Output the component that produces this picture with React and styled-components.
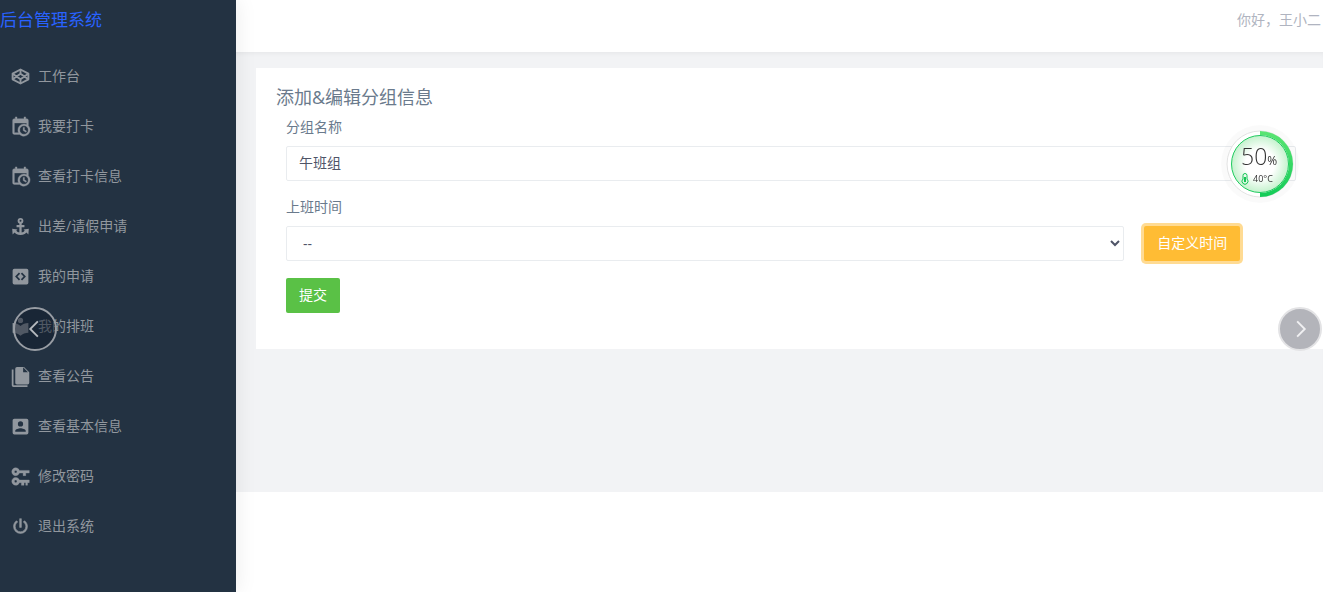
import React from 'react';
import styled, { createGlobalStyle } from "styled-components";

const menuItems = [
    { text: "工作台", icon: "codepen" },
    { text: "我要打卡", icon: "calendar" },
    { text: "查看打卡信息", icon: "calendar" },
    { text: "出差/请假申请", icon: "anchor" },
    { text: "我的申请", icon: "code" },
    { text: "我的排班", icon: "reader" },
    { text: "查看公告", icon: "files" },
    { text: "查看基本信息", icon: "account" },
    { text: "修改密码", icon: "keys" },
    { text: "退出系统", icon: "power" },
];

const icons = {
    codepen: (
        <g fill="none" stroke="currentColor" strokeWidth="2.2" strokeLinejoin="round">
            <path d="M12 4L21 8.8V15.2L12 20L3 15.2V8.8Z" />
            <path d="M12 4V8.600M12 15.400V20M3 8.800L12 15.200L21 8.800M3 15.200L12 8.800L21 15.200" />
        </g>
    ),
    calendar: <path strokeWidth="0.4" stroke="currentColor" d="M15,13H16.5V15.82L18.94,17.23L18.19,18.53L15,16.69V13M19,8H5V19H9.67C9.24,18.09 9,17.07 9,16A7,7 0 0,1 16,9C17.07,9 18.09,9.24 19,9.67V8M5,21C3.89,21 3,20.1 3,19V5C3,3.89 3.89,3 5,3H6V1H8V3H16V1H18V3H19A2,2 0 0,1 21,5V11.1C22.24,12.36 23,14.09 23,16A7,7 0 0,1 16,23C14.09,23 12.36,22.24 11.1,21H5M16,11.15A4.85,4.85 0 0,0 11.15,16C11.15,18.68 13.32,20.85 16,20.85A4.85,4.85 0 0,0 20.85,16C20.85,13.32 18.68,11.15 16,11.15Z" />,
    anchor: (
        <g>
            <path fill="none" stroke="currentColor" strokeWidth="2.6" d="M12 7V20M7.500 11.500H16.500M5 16.500C6.500 19 9 20.300 12 20.300S17.500 19 19 16.500" />
            <circle cx="12" cy="5.5" r="2.2" fill="none" stroke="currentColor" strokeWidth="2.2" />
            <path d="M2.500 14.500L8.500 15.500L3 21ZM21.500 14.500L15.500 15.500L21 21Z" />
        </g>
    ),
    code: <path fillRule="evenodd" d="M5,3H19A2,2 0 0,1 21,5V19A2,2 0 0,1 19,21H5A2,2 0 0,1 3,19V5A2,2 0 0,1 5,3ZM10.2,7.4L5.8,12L10.2,16.6L11.6,15.2L8.5,12L11.6,8.8ZM13.8,7.4L12.4,8.8L15.5,12L12.4,15.2L13.8,16.6L18.2,12Z" />,
    reader: <path d="M12,8A3,3 0 0,0 15,5A3,3 0 0,0 12,2A3,3 0 0,0 9,5A3,3 0 0,0 12,8M12,11.54C9.64,9.35 6.5,8 3,8V19C6.5,19 9.64,20.35 12,22.54C14.36,20.35 17.5,19 21,19V8C17.5,8 14.36,9.35 12,11.54Z" />,
    files: <path d="M15,7H20.5L15,1.5V7M8,1H16L22,7V19A2,2 0 0,1 20,21H8C6.89,21 6,20.1 6,19V3A2,2 0 0,1 8,1M4,4V22H20V24H4A2,2 0 0,1 2,22V4H4Z" />,
    account: <path d="M6,17C6,15 10,13.9 12,13.9C14,13.9 18,15 18,17V18H6M15,9A3,3 0 0,1 12,12A3,3 0 0,1 9,9A3,3 0 0,1 12,6A3,3 0 0,1 15,9M3,5V19A2,2 0 0,0 5,21H19A2,2 0 0,0 21,19V5A2,2 0 0,0 19,3H5C3.89,3 3,3.9 3,5Z" />,
    keys: <path strokeWidth="0.4" stroke="currentColor" d="M6.5,2C8.46,2 10.13,3.25 10.74,5H22V8H18V11H15V8H10.74C10.13,9.75 8.46,11 6.5,11C4,11 2,9 2,6.5C2,4 4,2 6.5,2M6.5,5A1.5,1.5 0 0,0 5,6.5A1.5,1.5 0 0,0 6.5,8A1.5,1.5 0 0,0 8,6.5A1.5,1.5 0 0,0 6.5,5M6.5,13C8.46,13 10.13,14.25 10.74,16H22V19H20V22H18V19H16V22H13V19H10.74C10.13,20.75 8.46,22 6.5,22C4,22 2,20 2,17.5C2,15 4,13 6.5,13M6.5,16A1.5,1.5 0 0,0 5,17.5A1.5,1.5 0 0,0 6.5,19A1.5,1.5 0 0,0 8,17.5A1.5,1.5 0 0,0 6.5,16Z" />,
    power: <path strokeWidth="0.6" stroke="currentColor" d="M16.56,5.44L15.11,6.89C16.84,7.94 18,9.83 18,12A6,6 0 0,1 12,18A6,6 0 0,1 6,12C6,9.83 7.16,7.94 8.88,6.88L7.44,5.44C5.36,6.88 4,9.28 4,12A8,8 0 0,0 12,20A8,8 0 0,0 20,12C20,9.28 18.64,6.88 16.56,5.44M13,3H11V13H13Z" />,
};

const Gauge = () => (
    <GaugeBox>
        <GaugeDrawing viewBox="0 0 80 80">
            <defs>
                <radialGradient id="glow">
                    <stop offset="0.5" stopColor="#ffffff" />
                    <stop offset="1" stopColor="#c4f2cd" />
                </radialGradient>
                <linearGradient id="ring" x1="0" y1="0" x2="0" y2="1">
                    <stop offset="0" stopColor="#5be573" />
                    <stop offset="1" stopColor="#12cb57" />
                </linearGradient>
            </defs>
            <circle cx="40" cy="40" r="39" fill="#000" fillOpacity="0.02" />
            <circle cx="40" cy="40" r="33" fill="#fff" stroke="#e2e2e2" />
            <path d="M40 7A33 33 0 0 1 40 73Z" fill="url(#ring)" />
            <circle cx="40" cy="40" r="29" fill="#fff" />
            <circle cx="40" cy="40" r="28.5" fill="url(#glow)" stroke="#1fcb5f" />
        </GaugeDrawing>
        <GaugeText>
            <Percent>50<small>%</small></Percent>
            <Temperature>
                <svg width="8" height="12" viewBox="0 0 8 12" fill="none" stroke="#14c656">
                    <path d="M2 6V2.500A2 2 0 0 1 6 2.500V6A3 3 0 1 1 2 6Z" />
                    <path strokeWidth="2" d="M4 4V9" />
                </svg>
                40°C
            </Temperature>
        </GaugeText>
    </GaugeBox>
)

const App = () => {
    return (
        <Page>
            <GlobalStyle />
            <Sidebar>
                <Brand href="#">后台管理系统</Brand>
                <Menu>
                    {menuItems.map((item) => (
                        <li key={item.text}>
                            <MenuLink href="#">
                                <MenuIcon viewBox="0 0 24 24">{icons[item.icon]}</MenuIcon>
                                {item.text}
                            </MenuLink>
                        </li>
                    ))}
                </Menu>
            </Sidebar>
            <Main>
                <Header>你好，王小二</Header>
                <Content>
                    <Card>
                        <CardTitle>添加&amp;编辑分组信息</CardTitle>
                        <Form onSubmit={(e) => e.preventDefault()}>
                            <Label htmlFor="groupName">分组名称</Label>
                            <Input id="groupName" type="text" defaultValue="午班组" />
                            <Label htmlFor="workTime">上班时间</Label>
                            <TimeRow>
                                <Select id="workTime">
                                    <option>--</option>
                                </Select>
                                <Button type="button" $color="#ffbc34" $ring="#ffdb93">自定义时间</Button>
                            </TimeRow>
                            <Button type="submit" $color="#5ac146">提交</Button>
                        </Form>
                    </Card>
                </Content>
            </Main>
            <Gauge />
            <ArrowButton $side="left" aria-label="上一张">
                <svg viewBox="0 0 42 42"><path d="M24 13L16 21L24 29" /></svg>
            </ArrowButton>
            <ArrowButton $side="right" aria-label="下一张">
                <svg viewBox="0 0 42 42"><path d="M18 13L26 21L18 29" /></svg>
            </ArrowButton>
        </Page>
    )
}

export default App

const GlobalStyle = createGlobalStyle`
    * {
        box-sizing: border-box;
    }
    body {
        margin: 0;
        background: #fff;
        color: #6a7a8c;
        font-family: "Open Sans", "Noto Sans CJK SC", sans-serif;
        font-size: 14px;
        line-height: 20px;
    }
    button, input, select {
        font: inherit;
    }
`
const Page = styled.div`
    display: flex;
    min-height: 100vh;
    overflow: hidden;
`
const Sidebar = styled.nav`
    flex: none;
    width: 236px;
    background: #233242;
    box-shadow: 1px 0 20px rgba(0, 0, 0, 0.08);
    z-index: 1;
`
const Brand = styled.a`
    display: block;
    height: 51px;
    color: #2962ff;
    font-size: 17px;
    line-height: 40px;
    text-decoration: none;
`
const Menu = styled.ul`
    margin: 0;
    padding: 0;
    list-style: none;
`
const MenuLink = styled.a`
    display: flex;
    align-items: center;
    gap: 7px;
    height: 50px;
    padding-left: 10px;
    color: #91979e;
    text-decoration: none;
`
const MenuIcon = styled.svg`
    width: 21px;
    height: 21px;
    fill: currentColor;
    overflow: visible;
`
const Main = styled.main`
    flex: 1;
    min-width: 0;
`
const Header = styled.header`
    height: 52px;
    padding: 10px 2px;
    color: #b0b4c0;
    text-align: right;
`
const Content = styled.div`
    min-height: 440px;
    padding: 16px 0 0 20px;
    background: #f2f3f5;
    box-shadow: inset 0 4px 6px -4px rgba(0, 0, 0, 0.08);
`
const Card = styled.section`
    padding: 17px 27px 36px 20px;
    background: #fff;
`
const CardTitle = styled.h4`
    margin: 0;
    padding-bottom: 1px;
    font-size: 18px;
    font-weight: 400;
    line-height: 24px;
`
const Form = styled.form`
    padding-left: 10px;
`
const Label = styled.label`
    display: block;
    padding: 7px 0 9px;
`
const Input = styled.input`
    display: block;
    width: 100%;
    height: 35px;
    margin-bottom: 9px;
    padding: 0 12px 3px;
    border: 1px solid #e9ecef;
    border-radius: 2px;
    background: #fff;
    color: #4f5467;
`
const TimeRow = styled.div`
    display: grid;
    grid-template-columns: repeat(12, minmax(0, 1fr));
    gap: 20px;
    margin-bottom: 17px;
`
const Select = styled.select`
    grid-column: span 10;
    height: 35px;
    padding: 0 12px;
    border: 1px solid #e9ecef;
    border-radius: 2px;
    background: #fff;
    color: #4f5467;
`
const Button = styled.button`
    justify-self: start;
    height: 35px;
    padding: 0 13px 2px;
    border: 0;
    border-radius: 2px;
    background: ${props => props.$color};
    box-shadow: ${props => props.$ring ? `0 0 0 3px ${props.$ring}` : "none"};
    color: #fff;
    white-space: nowrap;
`
const ArrowButton = styled.button`
    position: fixed;
    top: 307px;
    ${props => props.$side === "left" ? "left: 13px;" : "right: 1px;"}
    width: 44px;
    height: 44px;
    padding: 0;
    border: 2px solid ${props => props.$side === "left" ? "#989da4" : "#e3e3e5"};
    border-radius: 50%;
    background: ${props => props.$side === "left" ? "rgba(16, 26, 42, 0.5)" : "#b3b4ba"};
    z-index: 2;

    svg {
        display: block;
        width: 40px;
        height: 40px;
        fill: none;
        stroke: ${props => props.$side === "left" ? "#b4b8bd" : "#f0f0f2"};
        stroke-width: 2;
    }
`
const GaugeBox = styled.div`
    position: fixed;
    top: 124px;
    right: 23px;
    width: 80px;
    height: 80px;
    z-index: 2;
`
const GaugeDrawing = styled.svg`
    position: absolute;
    inset: 0;
`
const GaugeText = styled.div`
    position: relative;
    display: flex;
    flex-direction: column;
    padding: 20px 0 0 21px;
    color: #333;
`
const Percent = styled.div`
    font-size: 23px;
    font-weight: 300;
    line-height: 24px;

    small {
        font-size: 12px;
        font-weight: 400;
    }
`
const Temperature = styled.div`
    display: flex;
    align-items: center;
    gap: 4px;
    font-size: 9px;
    line-height: 12px;
`
